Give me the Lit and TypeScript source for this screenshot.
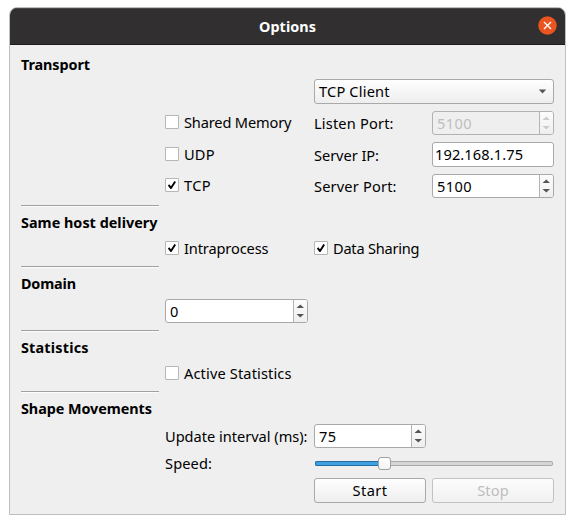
import { LitElement, html, svg, css, nothing } from "lit";
import { customElement, property } from "lit/decorators.js";
import { classMap } from "lit/directives/class-map.js";

/** A line of text tracked so that it spans the given width. */
@customElement("fit-text")
class FitText extends LitElement {
  @property() text = "";
  @property({ type: Number }) span = 0;

  static styles = css`
    :host { display: inline-block; white-space: nowrap; }
  `;

  updated() {
    const el = this.renderRoot.querySelector("span") as HTMLElement;
    el.style.letterSpacing = "0px";
    const n = this.text.length - 1;
    if (n > 0 && this.span) {
      const natural = el.getBoundingClientRect().width;
      el.style.letterSpacing = `${((this.span - natural) / n).toFixed(3)}px`;
    }
  }

  render() {
    return html`<span>${this.text}</span>`;
  }
}

@customElement("check-box")
class CheckBox extends LitElement {
  @property() label = "";
  @property({ type: Number }) span = 0;
  @property({ type: Boolean }) checked = false;

  static styles = css`
    :host { display: flex; align-items: center; gap: 5px; height: 14px; }
    .box {
      box-sizing: border-box; width: 14px; height: 14px; flex: none;
      background: #fff; border: 1px solid #b6b6b6; border-radius: 1px;
    }
    svg { display: block; width: 12px; height: 12px; }
    .text { line-height: 20px; }
  `;

  render() {
    return html`
      <div class="box">
        ${this.checked
          ? html`<svg viewBox="0 0 12 12">${svg`<path d="M2.6 5.9 L5 9.1 L9.2 2.6" fill="none" stroke="#000" stroke-width="1.9" stroke-linejoin="round"/>`}</svg>`
          : nothing}
      </div>
      <fit-text class="text" .text=${this.label} .span=${this.span}></fit-text>
    `;
  }
}

@customElement("spin-box")
class SpinBox extends LitElement {
  @property() value = "";
  @property({ type: Number }) span = 0;
  @property({ type: Boolean }) disabled = false;

  static styles = css`
    :host { display: block; height: 24px; }
    .field {
      box-sizing: border-box; height: 24px; display: flex; overflow: hidden;
      border: 1px solid #a9a9a9; border-radius: 3px; background: #fff;
    }
    .value { flex: 1; padding-left: 4px; line-height: 22px; }
    .steps {
      width: 13px; border-left: 1px solid #b4b4b4;
      background: linear-gradient(#fcfcfc, #efefef);
    }
    svg { display: block; width: 13px; height: 22px; fill: #555; }
    .off { background: #efefef; border-color: #b2b2b2; color: #bebebe; }
    .off svg { fill: #cdcdcd; }
  `;

  render() {
    return html`
      <div class=${classMap({ field: true, off: this.disabled })}>
        <fit-text class="value" .text=${this.value} .span=${this.span}></fit-text>
        <div class="steps">
          <svg viewBox="0 0 13 22"><path d="M2.5 8 L6.3 4.4 L10 8Z M2.5 14 H10 L6.3 17.6Z" /></svg>
        </div>
      </div>
    `;
  }
}

@customElement("app-root")
class AppRoot extends LitElement {
  static styles = css`
    :host {
      display: block; box-sizing: border-box; height: 524px; padding: 7px 9px 9px;
      background: #fff; color: #000;
      font: 14.6px "Noto Sans", "Open Sans", sans-serif;
    }
    .window {
      box-sizing: border-box; width: 557px; height: 508px; overflow: hidden;
      border: 1px solid #bfbfbf; border-radius: 8px 8px 0 0; background: #efefef;
    }
    .bar {
      box-sizing: border-box; height: 37px; display: grid; align-items: center;
      grid-template-columns: 36px 1fr 36px; justify-items: center;
      background: #322f30; border-bottom: 1px solid #1d1b1c; color: #fff; font-weight: 700;
      box-shadow: inset 0 1px #4a4748;
    }
    .title { grid-column: 2; line-height: 20px; margin-top: 2px; font-size: 14.4px; }
    .close { width: 19px; height: 19px; display: block; margin-bottom: 1px; }
    .form {
      display: grid; column-gap: 6px; padding: 4px 11px 0;
      grid-template-columns: 138px 143px 112px 122px;
      grid-template-rows:
        30px 30px 28px 36px 26px 8px
        32px 20px 9px
        31px 24px 9px
        30px 24px 7px
        31px 24px 30px 25px;
      align-items: center;
    }
    .head { grid-column: 1 / -1; align-self: start; margin-top: 6px; line-height: 20px; font-weight: 700; font-size: 14.4px; }
    .rule { grid-column: 1; align-self: end; height: 1px; background: #a0a0a0; border-bottom: 1px solid #fcfcfc; }
    .c2 { grid-column: 2; }
    .c3 { grid-column: 3; }
    .c4 { grid-column: 4; }
    .wide { grid-column: 3 / 5; }
    .tick { margin-bottom: 2px; }
    .label { line-height: 20px; margin-bottom: 1px; }
    .combo {
      box-sizing: border-box; height: 25px; align-self: start; display: flex; align-items: center;
      justify-content: space-between; padding: 0 6px 0 4px; line-height: 21px;
      border: 1px solid #a9a9a9; border-radius: 3px; background: linear-gradient(#fefefe, #eee);
    }
    .arrow { width: 9px; height: 5px; fill: #555; }
    .input {
      box-sizing: border-box; height: 25px; align-self: start; margin-top: 5px; padding-left: 2px;
      border: 1px solid #a9a9a9; border-radius: 3px; background: #fff; line-height: 23px;
    }
    .button {
      box-sizing: border-box; height: 25px; line-height: 23px; text-align: center;
      border: 1px solid #a9a9a9; border-radius: 3px; background: linear-gradient(#fefefe, #eee);
    }
    .off { border-color: #c3c3c3; color: #bebebe; background: linear-gradient(#fcfcfc, #f1f1f1); }
    .slider { display: grid; grid-template-columns: 63px 13px 1fr; align-items: center; padding: 1px 1px 0; }
    .fill, .track { box-sizing: border-box; height: 5px; border: 1px solid #a9a9a9; background: #d6d6d6; }
    .fill { border-color: #226d9f; background: #3fa1e2; border-radius: 2px 0 0 2px; border-right: 0; }
    .track { border-radius: 0 2px 2px 0; border-left: 0; }
    .knob {
      box-sizing: border-box; height: 13px; border: 1px solid #a0a0a0; border-radius: 3px;
      background: linear-gradient(#fff, #f4f4f4);
    }
  `;

  private text(cls: string, text: string, span: number) {
    return html`<fit-text class=${cls} .text=${text} .span=${span}></fit-text>`;
  }

  private check(cls: string, label: string, span: number, checked = false) {
    return html`<check-box class="tick ${cls}" .label=${label} .span=${span} .checked=${checked}></check-box>`;
  }

  private spin(cls: string, value: string, span: number, disabled = false) {
    return html`<spin-box class=${cls} .value=${value} .span=${span} .disabled=${disabled}></spin-box>`;
  }

  render() {
    return html`
      <div class="window">
        <div class="bar">
          ${this.text("title", "Options", 57)}
          <svg class="close" viewBox="0 0 19 19">
            <circle cx="9.5" cy="9.5" r="9.3" fill="#e95420" />
            <path d="M6 6 L13 13 M13 6 L6 13" stroke="#fff" stroke-width="1.4" />
          </svg>
        </div>
        <div class="form">
          ${this.text("head", "Transport", 69)}
          <div class="combo wide">
            ${this.text("", "TCP Client", 70.5)}
            <svg class="arrow" viewBox="0 0 9 5"><path d="M0.8 0.5 H8.2 L4.5 4.5Z" /></svg>
          </div>
          ${this.check("c2", "Shared Memory", 107.5)}
          ${this.text("label c3", "Listen Port:", 79.5)}
          ${this.spin("c4", "5100", 34.5, true)}
          ${this.check("c2", "UDP", 30.5)}
          ${this.text("label c3", "Server IP:", 65)}
          <div class="input c4">${this.text("", "192.168.1.75", 88)}</div>
          ${this.check("c2", "TCP", 26.5, true)}
          ${this.text("label c3", "Server Port:", 82.5)}
          ${this.spin("c4", "5100", 34.5)}
          <div class="rule"></div>
          ${this.text("head", "Same host delivery", 136.5)}
          ${this.check("c2", "Intraprocess", 84.5, true)}
          ${this.check("wide", "Data Sharing", 86.5, true)}
          <div class="rule"></div>
          ${this.text("head", "Domain", 55)}
          ${this.spin("c2", "0", 0)}
          <div class="rule"></div>
          ${this.text("head", "Statistics", 67.5)}
          ${this.check("c2", "Active Statistics", 107.5)}
          <div class="rule"></div>
          ${this.text("head", "Shape Movements", 131)}
          ${this.text("label c2", "Update interval (ms):", 142.5)}
          ${this.spin("c3", "75", 17)}
          ${this.text("label c2", "Speed:", 47)}
          <div class="slider wide">
            <div class="fill"></div>
            <div class="knob"></div>
            <div class="track"></div>
          </div>
          <div class="button c3">${this.text("", "Start", 34.5)}</div>
          <div class="button off c4">${this.text("", "Stop", 31.5)}</div>
        </div>
      </div>
    `;
  }
}
